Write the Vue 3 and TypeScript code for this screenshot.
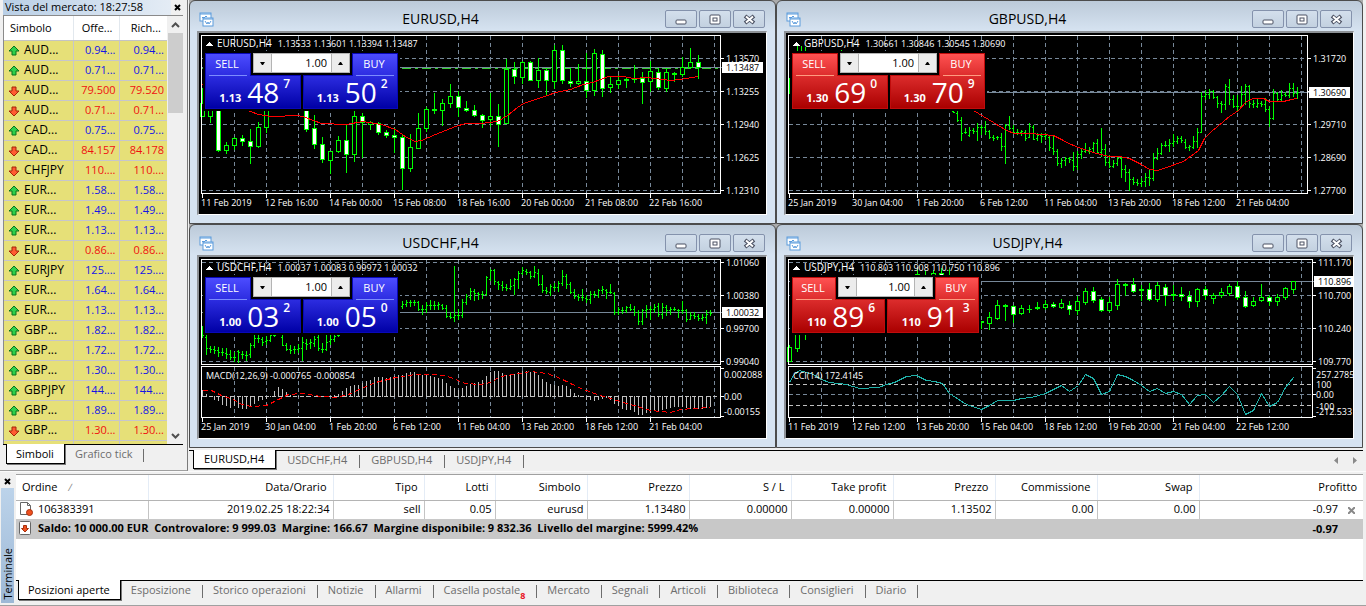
<script setup lang="ts">
import { ref } from 'vue'

type Pt = [number, number]
// high, body top, body bottom, low, filled
type Candle = [number, number, number, number, 0 | 1]
// high, low, open, close
type Bar = [number, number, number, number]
interface Run<T> { from: number; rows: T[] }
interface Label { y: number; text: string }
interface Chart {
  symbol: string
  values: string
  tone: 'blue' | 'red'
  compact?: boolean
  pre: string
  sell: [string, string]
  buy: [string, string]
  right: number
  unit: number
  ox: number
  oy: number
  hgrid: number[]
  price: { y: number; text: string }
  labels: Label[]
  times: string[]
  candles?: Run<Candle>[]
  bars?: Run<Bar>[]
  average?: Pt[]
  bid?: number
  sub?: { title: string; labels: Label[]; zero: number; levels: number[]; line: Pt[]; color: string; dash: string; hist?: number[] }
}

const charts: Chart[] = [
  {
    symbol: 'EURUSD,H4', values: '1.13533 1.13601 1.13394 1.13487', tone: 'blue',
    pre: '1.13', sell: ['48', '7'], buy: ['50', '2'],
    right: 521, unit: 1, ox: 199, oy: 33, hgrid: [25, 58, 91, 124, 157],
    price: { y: 34, text: '1.13487' }, bid: 35,
    labels: [{ y: 25, text: '1.13570' }, { y: 58, text: '1.13255' }, { y: 91, text: '1.12940' }, { y: 124, text: '1.12625' }, { y: 157, text: '1.12310' }],
    times: ['11 Feb 2019', '12 Feb 16:00', '14 Feb 00:00', '15 Feb 08:00', '18 Feb 16:00', '20 Feb 00:00', '21 Feb 08:00', '22 Feb 16:00'],
    candles: [
      { from: 0, rows: [[88, 103, 116, 116, 0], [98, 100, 116, 122, 0], [98, 100, 150, 151, 1], [142, 145, 150, 153, 0], [137, 138, 145, 149, 0], [135, 138, 141, 145, 1], [129, 141, 146, 163, 1], [122, 127, 146, 147, 0], [100, 105, 127, 132, 0]] },
      { from: 13, rows: [
        [100, 105, 129, 131, 1], [115, 128, 144, 148, 1], [137, 144, 159, 162, 1], [151, 151, 160, 173, 0], [136, 140, 151, 152, 0], [125, 140, 154, 172, 1], [111, 116, 154, 161, 0], [113, 116, 122, 157, 1], [121, 122, 124, 129, 0], [122, 123, 132, 134, 1],
        [130, 132, 135, 137, 1], [128, 135, 137, 152, 1], [134, 137, 168, 189, 1], [134, 147, 168, 171, 0], [113, 128, 148, 148, 0], [107, 109, 128, 131, 0], [93, 109, 110, 113, 0], [99, 103, 110, 125, 0], [84, 96, 103, 107, 0], [91, 96, 107, 116, 1],
        [101, 108, 110, 111, 1], [105, 110, 115, 116, 1], [114, 115, 120, 127, 1], [93, 116, 119, 126, 0], [104, 116, 124, 146, 1], [59, 69, 123, 123, 0], [62, 69, 76, 83, 1], [61, 62, 77, 83, 0], [61, 62, 80, 80, 1], [58, 70, 80, 87, 0],
        [68, 70, 80, 94, 1], [45, 50, 81, 88, 0], [45, 50, 80, 83, 1], [68, 81, 83, 86, 1], [64, 81, 83, 84, 0], [53, 81, 90, 97, 1], [49, 53, 90, 95, 0], [50, 54, 88, 96, 1], [77, 84, 87, 92, 0], [75, 80, 84, 88, 0],
        [77, 79, 80, 87, 0], [65, 78, 79, 82, 0], [72, 78, 82, 103, 1], [61, 71, 81, 91, 0], [68, 72, 87, 89, 1], [68, 72, 88, 91, 0], [72, 73, 74, 81, 0], [57, 67, 74, 76, 0], [48, 62, 67, 68, 0], [55, 62, 67, 78, 1]] },
    ],
    average: [[201, 83], [225, 100], [250, 111], [258, 114], [271, 116], [298, 115], [305, 117], [321, 123], [346, 124], [362, 121], [381, 124], [395, 129], [406, 137], [415, 141], [421, 140], [435, 134], [455, 126], [465, 123], [480, 123], [497, 121], [507, 115], [517, 107], [523, 103], [547, 95], [555, 92], [570, 89], [583, 84], [592, 82], [608, 76], [623, 76], [633, 78], [647, 77], [670, 80], [680, 79], [698, 76]],
  },
  {
    symbol: 'GBPUSD,H4', values: '1.30661 1.30846 1.30545 1.30690', tone: 'red',
    pre: '1.30', sell: ['69', '0'], buy: ['70', '9'],
    right: 521, unit: 3, ox: 30, oy: 99, hgrid: [25, 58, 91, 124, 157],
    price: { y: 59, text: '1.30690' },
    labels: [{ y: 25, text: '1.31720' }, { y: 91, text: '1.29710' }, { y: 124, text: '1.28690' }, { y: 157, text: '1.27700' }],
    times: ['25 Jan 2019', '30 Jan 04:00', '1 Feb 20:00', '6 Feb 12:00', '11 Feb 04:00', '13 Feb 20:00', '18 Feb 12:00', '21 Feb 04:00'],
    bars: [
      { from: 0, rows: [[235, 280, 260, 260]] },
      { from: 2, rows: [[137, 152, 152, 152], [137, 152, 152, 152], [140, 152, 152, 152]] },
      { from: 13, rows: [[150, 153, 152, 152]] },
      { from: 41, rows: [
        [315, 336, 334, 335], [333, 362, 340, 361], [350, 420, 361, 398], [385, 400, 396, 396], [381, 407, 406, 390], [385, 399, 389, 393], [369, 420, 393, 380], [375, 402, 380, 381], [363, 402, 380, 393], [390, 415, 393, 410],
        [405, 420, 410, 413], [407, 417, 412, 411], [400, 450, 411, 437], [372, 489, 437, 375], [348, 387, 375, 383], [375, 400, 383, 395], [387, 402, 395, 395], [390, 405, 395, 393], [390, 420, 395, 413], [369, 412, 410, 377],
        [375, 417, 380, 416], [400, 420, 413, 404], [400, 425, 404, 408], [400, 417, 408, 405], [405, 450, 411, 442], [405, 462, 445, 452], [447, 495, 452, 490], [475, 500, 490, 480], [470, 495, 480, 473], [471, 485, 475, 478],
        [455, 510, 480, 497], [453, 507, 497, 462], [445, 475, 462, 452], [430, 455, 452, 450], [440, 460, 452, 447], [425, 455, 445, 430], [418, 460, 430, 457], [384, 467, 457, 447], [432, 495, 447, 487], [465, 500, 487, 497],
        [480, 500, 497, 490], [470, 495, 490, 474], [467, 531, 474, 507], [495, 544, 507, 515], [507, 570, 515, 537], [530, 552, 537, 545], [538, 555, 545, 548], [535, 557, 548, 542], [519, 557, 542, 530], [508, 555, 530, 533],
        [460, 540, 533, 475], [445, 478, 475, 460], [430, 462, 460, 434], [422, 438, 434, 435], [418, 452, 435, 430], [403, 438, 428, 422], [408, 430, 422, 415], [408, 427, 415, 420], [418, 444, 425, 440], [435, 450, 440, 438],
        [408, 445, 442, 424], [384, 440, 424, 395], [277, 395, 395, 287], [270, 298, 287, 283], [268, 295, 283, 272], [269, 294, 272, 292], [287, 322, 292, 309], [302, 336, 309, 313], [252, 327, 313, 258], [237, 312, 260, 298],
        [285, 320, 298, 317], [285, 330, 317, 317], [258, 317, 317, 282], [252, 312, 282, 258], [255, 320, 258, 310], [300, 320, 312, 310], [297, 321, 318, 308], [303, 317, 310, 312], [295, 333, 312, 327], [318, 377, 327, 353],
        [266, 356, 353, 280], [275, 304, 280, 297], [270, 300, 297, 284], [275, 288, 282, 284], [249, 290, 284, 265], [249, 287, 265, 280], [261, 295, 280, 277]] },
    ],
    average: [[590, 329], [650, 365], [690, 390], [715, 398], [760, 398], [830, 404], [860, 420], [870, 425], [905, 441], [960, 458], [1000, 467], [1030, 467], [1060, 475], [1095, 492], [1120, 507], [1142, 511], [1170, 502], [1220, 482], [1265, 450], [1285, 415], [1305, 393], [1340, 363], [1360, 347], [1385, 330], [1410, 303], [1430, 293], [1460, 295], [1480, 303], [1520, 303], [1545, 297], [1564, 294]],
  },
  {
    symbol: 'USDCHF,H4', values: '1.00037 1.00083 0.99972 1.00032', tone: 'blue',
    pre: '1.00', sell: ['03', '2'], buy: ['05', '0'],
    right: 521, unit: 3, ox: 33, oy: 105, hgrid: [5, 38, 71, 104],
    price: { y: 55, text: '1.00032' },
    labels: [{ y: 5, text: '1.01060' }, { y: 38, text: '1.00380' }, { y: 71, text: '0.99700' }, { y: 104, text: '0.99040' }],
    times: ['25 Jan 2019', '30 Jan 04:00', '1 Feb 20:00', '6 Feb 12:00', '11 Feb 04:00', '13 Feb 20:00', '18 Feb 12:00', '21 Feb 04:00'],
    bars: [
      { from: 0, rows: [
        [312, 345, 320, 340], [340, 395, 345, 378], [372, 390, 378, 380], [372, 392, 382, 385], [375, 402, 385, 390], [377, 400, 390, 390], [378, 408, 392, 395], [384, 412, 397, 405], [390, 417, 405, 405], [384, 419, 387, 390],
        [387, 407, 395, 397], [387, 415, 398, 400], [362, 405, 397, 370], [340, 375, 370, 348], [340, 360, 348, 348], [345, 368, 350, 360], [342, 365, 358, 355], [335, 357, 355, 340], [336, 342, 339, 339]] },
      { from: 20, rows: [
        [336, 370, 345, 368], [362, 383, 370, 380], [370, 392, 382, 385], [372, 392, 382, 380], [365, 390, 380, 378], [345, 413, 378, 360], [350, 380, 362, 366], [352, 377, 364, 360], [343, 372, 362, 350], [338, 385, 345, 378],
        [362, 390, 380, 380], [340, 385, 380, 360], [340, 365, 358, 350], [336, 358, 350, 341], [336, 341, 340, 340]] },
      { from: 50, rows: [
        [237, 257, 252, 245], [233, 252, 245, 240], [235, 252, 240, 240], [235, 250, 240, 240], [238, 264, 240, 262], [248, 277, 262, 262], [240, 270, 262, 248], [235, 262, 248, 248], [238, 262, 248, 248], [240, 262, 248, 246],
        [245, 262, 250, 258], [250, 285, 258, 282], [270, 287, 282, 285], [131, 297, 285, 280], [262, 290, 280, 280], [232, 285, 280, 240], [217, 245, 240, 222], [198, 230, 225, 208], [200, 235, 208, 212], [210, 232, 213, 215],
        [207, 227, 215, 215], [163, 220, 215, 165], [142, 175, 170, 145], [142, 185, 145, 178], [177, 200, 180, 185], [178, 205, 190, 195], [187, 205, 195, 198], [172, 202, 198, 192], [168, 215, 190, 172], [148, 197, 172, 152],
        [135, 157, 152, 145], [140, 155, 147, 150], [147, 168, 150, 162], [132, 165, 162, 150], [140, 190, 152, 187], [160, 210, 187, 205], [195, 212, 205, 208], [187, 220, 210, 192], [183, 205, 195, 195], [178, 207, 195, 182],
        [145, 190, 182, 162], [157, 197, 162, 185], [180, 212, 185, 210], [202, 228, 210, 222], [217, 235, 222, 225], [200, 235, 225, 225], [220, 240, 228, 232], [207, 242, 230, 215], [208, 225, 215, 217], [200, 225, 220, 205],
        [192, 212, 205, 202], [200, 228, 205, 210], [186, 212, 210, 210], [210, 275, 212, 270], [255, 275, 270, 260], [255, 272, 265, 265], [252, 270, 265, 255], [246, 265, 255, 262], [252, 280, 262, 270], [263, 305, 270, 297],
        [262, 305, 297, 265], [250, 285, 265, 260], [252, 290, 260, 260], [246, 270, 262, 255], [243, 282, 252, 275], [243, 287, 275, 255], [250, 278, 255, 265], [255, 275, 265, 260], [255, 265, 260, 260], [260, 285, 265, 265],
        [237, 272, 265, 265], [262, 297, 265, 290], [270, 290, 290, 280], [270, 288, 280, 282], [275, 293, 282, 288], [275, 293, 288, 285], [263, 302, 285, 275], [263, 280, 270, 272]] },
    ],
    sub: {
      title: 'MACD(12,26,9) -0.000765 -0.000854', zero: 139, levels: [], color: '#f00', dash: '5 3',
      labels: [{ y: 117, text: '0.002088' }, { y: 139, text: '0.00' }, { y: 154, text: '-0.00155' }],
      hist: [505, 515, 521, 530, 535, 545, 548, 555, 548, 555, 558, 558, 550, 542, 535, 530, 528, 521, 508, 495, 502, 510, 519, 521, 521, 521, 521, 521, 521, 521, 521, 521, 521, 519, 515, 508, 498, 492, 490, 488, 484, 478, 473, 465, 465, 465, 467, 466, 463, 460, 458, 453, 450, 450, 457, 458, 460, 463, 465, 468, 472, 483, 492, 498, 503, 498, 492, 485, 482, 480, 475, 462, 450, 447, 447, 452, 458, 458, 457, 450, 448, 448, 450, 450, 458, 470, 480, 487, 489, 492, 490, 492, 500, 513, 519, 523, 530, 530, 533, 530, 527, 526, 530, 543, 549, 557, 560, 562, 568, 575, 575, 570, 570, 565, 563, 560, 558, 555, 553, 552, 552, 556, 557, 558, 557, 557, 556, 552],
      line: [[43, 503], [70, 505], [100, 518], [135, 532], [160, 545], [190, 553], [235, 548], [270, 530], [300, 517], [340, 512], [400, 523], [440, 524], [480, 515], [520, 498], [560, 480], [620, 465], [680, 457], [720, 455], [770, 458], [800, 470], [830, 482], [876, 487], [906, 480], [936, 463], [976, 455], [1026, 448], [1076, 453], [1116, 467], [1146, 483], [1186, 500], [1226, 515], [1276, 530], [1326, 545], [1386, 565], [1446, 570], [1476, 562], [1516, 558], [1566, 555]],
    },
  },
  {
    symbol: 'USDJPY,H4', values: '110.803 110.908 110.750 110.896', tone: 'red', compact: true,
    pre: '110', sell: ['89', '6'], buy: ['91', '3'],
    right: 526, unit: 3, ox: 30, oy: 105, hgrid: [5, 38, 71, 104],
    price: { y: 24, text: '110.896' },
    labels: [{ y: 5, text: '111.170' }, { y: 38, text: '110.700' }, { y: 71, text: '110.240' }, { y: 104, text: '109.770' }],
    times: ['11 Feb 2019', '12 Feb 12:00', '13 Feb 20:00', '15 Feb 04:00', '18 Feb 12:00', '19 Feb 20:00', '21 Feb 04:00', '22 Feb 12:00'],
    candles: [
      { from: 0, rows: [[368, 375, 416, 418, 0], [330, 332, 377, 387, 0], [330, 332, 335, 350, 0]] },
      { from: 16, rows: [[140, 156, 170, 175, 0], [147, 170, 175, 175, 0], [143, 153, 170, 175, 0], [137, 152, 165, 170, 1], [141, 170, 175, 180, 1]] },
      { from: 24, rows: [
        [298, 298, 301, 318, 0], [270, 286, 302, 320, 0], [234, 250, 287, 290, 0], [246, 249, 252, 293, 0], [250, 252, 275, 300, 1], [250, 259, 272, 277, 0], [250, 260, 261, 270, 0], [240, 256, 259, 260, 0], [235, 246, 256, 262, 0], [240, 247, 253, 254, 1],
        [231, 244, 254, 258, 0], [237, 250, 262, 275, 1], [222, 238, 263, 276, 0], [198, 208, 240, 245, 0], [195, 208, 234, 240, 1], [225, 231, 264, 267, 1], [225, 240, 264, 268, 0], [171, 187, 248, 260, 0], [183, 185, 188, 218, 0], [168, 187, 206, 210, 1],
        [190, 202, 205, 235, 0], [183, 201, 230, 234, 1], [180, 189, 231, 238, 0], [185, 195, 220, 249, 1], [190, 217, 220, 234, 0], [195, 217, 223, 234, 1], [208, 222, 236, 255, 1], [198, 202, 236, 252, 0], [192, 202, 220, 232, 1], [212, 220, 227, 242, 0],
        [198, 210, 220, 224, 0], [187, 192, 213, 220, 0], [178, 193, 226, 232, 1], [207, 226, 251, 254, 1], [224, 238, 248, 251, 0], [186, 226, 235, 237, 0], [219, 226, 238, 249, 1], [216, 226, 238, 249, 0], [195, 199, 226, 232, 0], [178, 178, 200, 213, 0]] },
    ],
    sub: {
      title: 'CCI(14) 172.4145', zero: 137, levels: [127, 148], color: '#20b2aa', dash: 'none',
      labels: [{ y: 117, text: '257.2785' }, { y: 127, text: '100' }, { y: 137, text: '0.00' }, { y: 149, text: '-100' }, { y: 154, text: '-212.533' }],
      line: [[38, 480], [52, 458], [68, 445], [90, 450], [110, 455], [135, 470], [160, 480], [185, 482], [210, 486], [250, 498], [305, 496], [330, 487], [355, 481], [390, 463], [420, 460], [450, 475], [475, 476], [497, 483], [520, 514], [570, 545], [616, 562], [640, 550], [664, 535], [712, 535], [735, 529], [765, 525], [808, 514], [832, 502], [856, 488], [880, 508], [905, 490], [928, 455], [952, 467], [976, 517], [1000, 508], [1024, 457], [1048, 462], [1072, 473], [1096, 490], [1120, 506], [1144, 497], [1168, 514], [1192, 506], [1216, 517], [1240, 545], [1264, 520], [1288, 517], [1312, 539], [1336, 520], [1360, 492], [1384, 515], [1408, 577], [1432, 565], [1456, 514], [1480, 552], [1504, 540], [1528, 495], [1550, 465]],
    },
  },
]

const vgrid = Array.from({ length: 16 }, (_, k) => 35 + 32 * k)
const bottomOf = (c: Chart) => (c.sub ? 107 : 160)
const yOf = (c: Chart, v: number) => Math.round((v - c.oy) / c.unit)
const points = (c: Chart, list: Pt[]) =>
  list.map(([x, y]) => `${Math.round((x - c.ox) / c.unit)},${yOf(c, y)}`).join(' ')

const box = (x: number, y: number, w: number, h: number) => `M${x} ${y}h${w}v${h}h${-w}z`

function barPath(c: Chart): string {
  let d = ''
  for (const run of c.bars ?? []) {
    run.rows.forEach(([hi, lo, open, close], k) => {
      const x = 3 + 4 * (run.from + k)
      const top = yOf(c, hi)
      d += box(x, top, 1, yOf(c, lo) - top + 1)
      d += box(x - 1, yOf(c, open), 1, 1) + box(x + 1, yOf(c, close), 1, 1)
    })
  }
  return d
}

function candlePath(c: Chart, part: 'edge' | 'hollow' | 'filled'): string {
  let d = ''
  for (const run of c.candles ?? []) {
    run.rows.forEach(([hi, bt, bb, lo, filled], k) => {
      const x = 3 + 8 * (run.from + k)
      const top = yOf(c, hi)
      const a = yOf(c, bt)
      const b = yOf(c, bb)
      if (part === 'edge') d += box(x, top, 1, yOf(c, lo) - top + 1) + box(x - 2, a, 5, b - a + 1)
      else if ((part === 'filled') === (filled === 1) && b - a > 1) d += box(x - 1, a + 1, 3, b - a - 1)
    })
  }
  return d
}

function histPath(c: Chart): string {
  const zero = c.sub?.zero ?? 0
  return (c.sub?.hist ?? []).map((v, k) => {
    const y = yOf(c, v)
    return box(3 + 4 * k, Math.min(y, zero), 1, Math.abs(y - zero) + 1)
  }).join('')
}

const quotes: [string, string, string, boolean][] = [
  ['AUD...', '0.94...', '0.94...', true], ['AUD...', '0.71...', '0.71...', true],
  ['AUD...', '79.500', '79.520', false], ['AUD...', '0.71...', '0.71...', false],
  ['CAD...', '0.75...', '0.75...', true], ['CAD...', '84.157', '84.178', false],
  ['CHFJPY', '110....', '110....', false], ['EUR...', '1.58...', '1.58...', true],
  ['EUR...', '1.49...', '1.49...', true], ['EUR...', '1.13...', '1.13...', true],
  ['EUR...', '0.86...', '0.86...', false], ['EURJPY', '125....', '125....', true],
  ['EUR...', '1.64...', '1.64...', true], ['EUR...', '1.13...', '1.13...', true],
  ['GBP...', '1.82...', '1.82...', true], ['GBP...', '1.72...', '1.72...', true],
  ['GBP...', '1.30...', '1.30...', true], ['GBPJPY', '144....', '144....', true],
  ['GBP...', '1.89...', '1.89...', true], ['GBP...', '1.30...', '1.30...', false],
]

const volumes = ref(['1.00', '1.00', '1.00', '1.00'])
const columns = ['Data/Orario', 'Tipo', 'Lotti', 'Simbolo', 'Prezzo', 'S / L', 'Take profit', 'Prezzo', 'Commissione', 'Swap', 'Profitto']
const order = ['2019.02.25 18:22:34', 'sell', '0.05', 'eurusd', '1.13480', '0.00000', '0.00000', '1.13502', '0.00', '0.00']
const chartTabs = ['EURUSD,H4', 'USDCHF,H4', 'GBPUSD,H4', 'USDJPY,H4']
const terminalTabs = ['Posizioni aperte', 'Esposizione', 'Storico operazioni', 'Notizie', 'Allarmi', 'Casella postale', 'Mercato', 'Segnali', 'Articoli', 'Biblioteca', 'Consiglieri', 'Diario']
</script>

<template>
  <div class="app">
    <aside class="market">
      <header class="market-title">
        <span class="caption">Vista del mercato: 18:27:58</span>
        <button class="close" aria-label="Chiudi">
          <svg width="7" height="7" viewBox="0 0 7 7"><path d="M1 1l5 5M6 1l-5 5" stroke="#000" stroke-width="2" /></svg>
        </button>
      </header>
      <div class="market-list">
        <table class="quotes">
          <colgroup><col class="c-sym"><col class="c-bid"><col></colgroup>
          <thead><tr><th>Simbolo</th><th>Offe...</th><th>Rich...</th></tr></thead>
          <tbody>
            <tr v-for="(q, i) in quotes" :key="i" :class="q[3] ? 'up' : 'down'">
              <td>
                <svg class="arrow" width="12" height="12" viewBox="0 0 12 12">
                  <path v-if="q[3]" d="M6 1l5 5h-3v4h-4v-4h-3z" fill="#2fd04a" stroke="#08731c" />
                  <path v-else d="M6 11l5-5h-3v-4h-4v4h-3z" fill="#ff5a30" stroke="#a32408" />
                </svg>{{ q[0] }}
              </td>
              <td>{{ q[1] }}</td><td>{{ q[2] }}</td>
            </tr>
            <tr class="rest"><td></td><td></td><td></td></tr>
          </tbody>
        </table>
        <div class="scroll">
          <button aria-label="Su"><svg width="9" height="6" viewBox="0 0 9 6"><path d="M1 5l3.500-3.500 3.500 3.500" fill="none" stroke="#505050" stroke-width="2" /></svg></button>
          <div class="thumb"></div>
          <button aria-label="Giu"><svg width="9" height="6" viewBox="0 0 9 6"><path d="M1 1l3.500 3.500 3.500-3.500" fill="none" stroke="#505050" stroke-width="2" /></svg></button>
        </div>
      </div>
      <nav class="tabs market-tabs">
        <button class="on">Simboli</button><button>Grafico tick</button>
      </nav>
    </aside>

    <main class="desk">
      <div class="windows">
        <section v-for="(c, i) in charts" :key="c.symbol" class="win">
          <header class="win-title">
            <svg width="15" height="15" viewBox="0 0 15 15">
              <rect x="1" y="1" width="11" height="8" fill="#fff" stroke="#5b9bdc" />
              <path d="M1 2h11M3 6l1-1 1 1 2-2 1 1" fill="none" stroke="#5b9bdc" />
              <rect x="4" y="6" width="10" height="8" fill="#fff" stroke="#5b9bdc" />
              <path d="M4 7h10M6 9l2 3 1-2 1 2 2-3" fill="none" stroke="#5b9bdc" />
            </svg>
            <h2>{{ c.symbol }}</h2>
            <div class="win-buttons">
              <button aria-label="Riduci"><svg width="13" height="13" viewBox="0 0 13 13"><rect x="1" y="7" width="10" height="4" rx="1" fill="#fff" stroke="#4b5162" /></svg></button>
              <button aria-label="Ingrandisci"><svg width="13" height="13" viewBox="0 0 13 13"><rect x="1" y="2" width="10" height="9" rx="1" fill="#fff" stroke="#4b5162" /><rect x="4" y="5" width="4" height="3" fill="#fff" stroke="#4b5162" /></svg></button>
              <button aria-label="Chiudi"><svg width="13" height="13" viewBox="0 0 13 13"><path d="M2 3l9 7M11 3l-9 7" stroke="#4b5162" stroke-width="4" /><path d="M3 3.500l7 6M10 3.500l-7 6" stroke="#fff" stroke-width="2" /></svg></button>
            </div>
          </header>
          <div class="client">
            <svg class="plot" viewBox="0 0 567 181" preserveAspectRatio="xMinYMin meet">
              <g transform="translate(.5 .5)" class="lines">
                <g class="grid">
                  <path v-for="x in vgrid" :key="x" :d="`M${x} 2V${bottomOf(c)}` + (c.sub ? `M${x} 109V160` : '')" />
                  <path v-for="y in c.hgrid" :key="'h' + y" :d="`M2 ${y}H${c.right}`" />
                  <path v-if="c.sub" :d="`M2 ${c.sub.zero}H${c.right}`" :class="{ level: c.sub.hist }" />
                  <path v-for="y in c.sub?.levels ?? []" :key="'l' + y" class="level" :d="`M2 ${y}H${c.right}`" />
                </g>
                <path class="price" :d="`M2 ${c.price.y}H${c.right + 4}`" />
                <path v-if="c.bid" class="bid" :d="`M2 ${c.bid}H${c.right}`" />
              </g>
              <path :d="histPath(c)" fill="#c0c0c0" />
              <path :d="barPath(c) + candlePath(c, 'edge')" fill="#0f0" />
              <path :d="candlePath(c, 'hollow')" fill="#000" />
              <path :d="candlePath(c, 'filled')" fill="#fff" />
              <g transform="translate(.5 .5)" class="lines">
                <polyline v-if="c.average" :points="points(c, c.average)" stroke="#f00" />
                <polyline v-if="c.sub" :points="points(c, c.sub.line)" :stroke="c.sub.color" :stroke-dasharray="c.sub.dash" />
                <g stroke="#fff">
                  <path :d="`M2 2H${c.right}V${bottomOf(c)}H2z`" />
                  <path v-if="c.sub" :d="`M2 109H${c.right}V160H2z`" />
                  <path v-for="y in c.hgrid" :key="y" :d="`M${c.right} ${y}h3`" />
                  <path v-if="c.sub" :d="`M${c.right} 111h3M${c.right} ${c.sub.zero}h3M${c.right} 159h3`" />
                  <path v-for="(t, k) in c.times" :key="t" :d="`M${3 + 64 * k} 160v4`" />
                </g>
              </g>
              <path d="M6 13l4-4 4 4z" fill="#fff" />
              <g class="labels">
                <text x="18" y="14" class="head">{{ c.symbol }}<tspan class="vals" dx="6">{{ c.values }}</tspan></text>
                <text v-for="l in c.labels" :key="l.text" :x="c.right + 6" :y="l.y + 4">{{ l.text }}</text>
                <rect :x="c.right + 2" :y="c.price.y - 5" width="41" height="11" fill="#fff" />
                <text class="now" :x="c.right + 6" :y="c.price.y + 4">{{ c.price.text }}</text>
                <text v-for="(t, k) in c.times" :key="t" :x="2 + 64 * k" y="173">{{ t }}</text>
                <template v-if="c.sub">
                  <text x="7" y="122">{{ c.sub.title }}</text>
                  <text v-for="l in c.sub.labels" :key="l.text" :x="c.right + 4" :y="l.y + 4">{{ l.text }}</text>
                </template>
              </g>
            </svg>
            <div class="deal" :class="[c.tone, { compact: c.compact }]">
              <button class="side sell">
                <span class="cap">SELL</span>
                <span class="quote"><b>{{ c.pre }}</b><span class="big">{{ c.sell[0] }}</span><sup>{{ c.sell[1] }}</sup></span>
              </button>
              <button class="side buy">
                <span class="cap">BUY</span>
                <span class="quote"><b>{{ c.pre }}</b><span class="big">{{ c.buy[0] }}</span><sup>{{ c.buy[1] }}</sup></span>
              </button>
              <div class="spin">
                <button aria-label="Meno"><svg width="5" height="3" viewBox="0 0 5 3"><path d="M0 0h5l-2 3h-1z" /></svg></button>
                <input v-model="volumes[i]" type="text" aria-label="Volume">
                <button aria-label="Piu"><svg width="5" height="3" viewBox="0 0 5 3"><path d="M0 3h5l-2-3h-1z" /></svg></button>
              </div>
            </div>
          </div>
        </section>
      </div>
      <nav class="tabs chart-tabs">
        <button v-for="(t, i) in chartTabs" :key="t" :class="{ on: i === 0 }">{{ t }}</button>
        <span class="pager">
          <svg width="23" height="7" viewBox="0 0 23 7"><path d="M4 0v7l-4-3.500zM19 0v7l4-3.500z" fill="#8a8a8a" /></svg>
        </span>
      </nav>
    </main>

    <section class="terminal">
      <div class="strip">
        <button class="close" aria-label="Chiudi">
          <svg width="7" height="7" viewBox="0 0 7 7"><path d="M1 1l5 5M6 1l-5 5" stroke="#000" stroke-width="2" /></svg>
        </button>
        <div class="strip-name"><span>Terminale</span></div>
      </div>
      <div class="orders">
        <div class="sheet">
          <table>
            <colgroup>
              <col class="w-order"><col class="w-date"><col class="w-type"><col class="w-lots"><col class="w-sym">
              <col v-for="n in 6" :key="n" class="w-num"><col>
            </colgroup>
            <thead>
              <tr>
                <th class="first">Ordine <i class="sort">∕</i></th>
                <th v-for="(h, i) in columns" :key="i">{{ h }}</th>
              </tr>
            </thead>
            <tbody>
              <tr>
                <td class="first">
                  <svg width="15" height="16" viewBox="0 0 15 16">
                    <path d="M1.500 1.500h7l3 3v9h-10z" fill="#fff" stroke="#666" /><path d="M8.500 1.500v3h3" fill="none" stroke="#666" />
                    <circle cx="10.500" cy="11.500" r="3" fill="#f0501e" stroke="#a8300c" />
                  </svg>106383391
                </td>
                <td v-for="(v, i) in order" :key="i">{{ v }}</td>
                <td class="profit">-0.97
                  <button class="drop" aria-label="Chiudi ordine"><svg width="7" height="7" viewBox="0 0 7 7"><path d="M0 0l7 7M7 0l-7 7" stroke="#888" stroke-width="2" /></svg></button>
                </td>
              </tr>
              <tr class="balance">
                <td class="first" colspan="11">
                  <svg width="13" height="15" viewBox="0 0 13 15">
                    <rect x=".5" y=".5" width="11" height="13" rx="1" fill="#fff" stroke="#666" />
                    <path d="M6 11l3.500-3.500h-2v-3h-3v3h-2z" fill="#f0501e" stroke="#a8300c" />
                  </svg>Saldo: 10 000.00 EUR&nbsp; Controvalore: 9 999.03&nbsp; Margine: 166.67&nbsp; Margine disponibile: 9 832.36&nbsp; Livello del margine: 5999.42%
                </td>
                <td class="profit">-0.97</td>
              </tr>
            </tbody>
          </table>
        </div>
        <nav class="tabs term-tabs">
          <button v-for="(t, i) in terminalTabs" :key="t" :class="{ on: i === 0 }">{{ t }}<sub v-if="t === 'Casella postale'">8</sub></button>
        </nav>
      </div>
    </section>
  </div>
</template>

<style>
body { margin: 0; background: #f0f0f0; }
</style>

<style scoped>
.app {
  min-height: 100vh;
  box-sizing: border-box;
  display: grid;
  grid-template-columns: 188px 1fr;
  grid-template-rows: auto 1fr;
  background: #f0f0f0;
  color: #000;
  font: 11px/14px "Open Sans", "Noto Sans", sans-serif;
  overflow: hidden;
}
button { font: inherit; margin: 0; padding: 0; border: 0; background: none; color: inherit; }
table { border-collapse: collapse; table-layout: fixed; width: 100%; }
svg { display: block; }

.market { display: flex; flex-direction: column; padding: 0 4px 4px 3px; border-right: 1px solid #7a7a7a; border-bottom: 1px solid #a0a0a0; }
.market-title { display: flex; align-items: center; height: 15px; }
.caption { flex: 1; height: 15px; padding-left: 2px; background: linear-gradient(90deg, #b9cfe6, #e4ecf5); white-space: nowrap; }
.close { width: 12px; height: 15px; display: grid; place-items: center; }
.market-list { display: flex; height: 429px; overflow: hidden; border-left: 1px solid #8a8a8a; border-top: 1px solid #8a8a8a; box-sizing: border-box; }
.quotes { width: 163px; background: #e6e078; align-self: flex-start; }
.c-sym { width: 69px; }
.c-bid { width: 46px; }
.quotes th { height: 24px; padding: 0 6px 0 0; background: #fff; font-weight: 400; text-align: right; border-right: 1px solid #e2e8ee; border-bottom: 1px solid #c4c4c4; box-sizing: border-box; }
.quotes th:first-child { text-align: left; padding-left: 6px; }
.quotes td { height: 20px; padding: 0 3px 0 0; text-align: right; box-sizing: border-box; border-right: 1px solid #c6c6cc; border-bottom: 1px solid #c6c6cc; overflow: hidden; white-space: nowrap; }
.quotes td:first-child { text-align: left; padding-left: 4px; color: #000; font-size: 12px; }
.quotes td:last-child, .quotes th:last-child { border-right: 0; }
.quotes .rest td { height: 6px; border-bottom: 0; }
.quotes .arrow { display: inline-block; vertical-align: -3px; margin-right: 4px; }
.up { color: #1414e6; }
.down { color: #f01010; }
.scroll { width: 15px; margin-left: 1px; display: flex; flex-direction: column; }
.scroll button { height: 17px; display: grid; place-items: center; }
.scroll .thumb { height: 80px; background: #cdcdcd; margin-bottom: auto; }

.tabs { display: flex; border-top: 1px solid #000; color: #6d6d6d; }
.tabs button { position: relative; padding: 0 12px 0 10px; height: 18px; white-space: nowrap; }
.tabs button::after { content: ""; position: absolute; right: 0; top: 4px; height: 13px; width: 1px; background: #6d6d6d; }
.tabs button.on { height: 20px; margin-top: -1px; padding: 1px 10px 0 9px; background: #fff; color: #000; border: 1px solid #000; border-top: 0; box-shadow: 1px 1px 0 #777; }
.tabs button.on::after { display: none; }
.tabs sub { color: #e81123; font-weight: 700; font-size: 9px; line-height: 0; vertical-align: -5px; }
.market-tabs { padding-left: 3px; height: 20px; }

.desk { display: flex; flex-direction: column; padding-right: 3px; padding-left: 1px; background: #f0f0f0; min-width: 0; }
.windows { display: grid; grid-template-columns: 1fr 1fr; background: #ababab; }
.win { box-sizing: border-box; height: 224px; min-width: 0; padding: 0 8px 8px 7px; border: 1px solid #4c4c4c; border-radius: 6px 6px 0 0; background: linear-gradient(#bccad9, #d6e3f1 30px); }
.win-title { display: flex; align-items: center; height: 30px; padding: 6px 2px 0 2px; box-sizing: border-box; }
.win-title h2 { flex: 1; margin: 0; padding-left: 2px; text-align: center; font-size: 14px; line-height: 20px; font-weight: 400; }
.win-buttons { display: flex; gap: 2px; }
.win-buttons button { width: 32px; height: 18px; display: grid; place-items: center; border: 1px solid #8492ac; border-radius: 2px; box-sizing: border-box; background: linear-gradient(#d3dfec, #c3d1e0); }
.client { position: relative; background: #000; border: solid #8d9196; border-width: 2px 1px 1px 2px; border-right-color: #fff; border-bottom-color: #fff; }
.plot { width: 100%; height: 181px; shape-rendering: crispEdges; overflow: hidden; }
.lines { fill: none; stroke-width: 1; }
.grid { stroke: #778899; stroke-dasharray: 4 3; }
.grid .level { stroke: #c0c0c0; }
.price { stroke: #778899; }
.bid { stroke: #32cd32; stroke-dasharray: 9 4 3 4; }
.labels { font-size: 9px; fill: #fff; }
.head { font-size: 10px; }
.vals { font-size: 9px; }
.labels .now { fill: #000; }

.deal { position: absolute; left: 6px; top: 20px; width: 193px; height: 56px; display: flex; justify-content: space-between; background: #000; box-shadow: 0 0 0 2px #000; color: #fff; --cap: 46px; }
.deal.compact { width: 187px; --cap: 44px; }
.blue { --hi: #4c4cff; --mid: #2c2ce0; --lo: #0000a6; --edge: #0808b8; --rule: #7c8cff; }
.red { --hi: #ff5252; --mid: #dc2c2c; --lo: #aa0000; --edge: #c00c0c; --rule: #ff9c80; }
.side { width: calc(50% - 1px); display: flex; flex-direction: column; }
.side.buy { align-items: flex-end; }
.cap { position: relative; z-index: 1; width: var(--cap); height: 23px; margin-bottom: -1px; box-sizing: border-box; border: 1px solid var(--edge); border-bottom: 0; padding-right: 2px; background: linear-gradient(var(--hi), var(--mid)); line-height: 20px; font-size: 11px; }
.cap::after { content: ""; position: absolute; left: 3px; right: 3px; bottom: 0; height: 1px; background: var(--rule); }
.quote { position: relative; width: 100%; height: 34px; box-sizing: border-box; border: 1px solid var(--edge); background: linear-gradient(var(--mid), var(--lo)); display: flex; justify-content: center; align-items: flex-end; }
.quote b { font-size: 11px; line-height: 12px; font-weight: 700; padding: 0 6px 4px 4px; }
.compact .quote b { padding-left: 6px; }
.big { font-size: 28px; line-height: 32px; }
.quote sup { align-self: flex-start; font-size: 12px; line-height: 14px; font-weight: 600; padding-left: 4px; margin-top: 1px; }
.spin { position: absolute; left: calc(var(--cap) + 2px); right: calc(var(--cap) + 2px); top: 0; height: 20px; display: flex; box-sizing: border-box; border: 1px solid #b4b4b4; background: #fff; }
.spin button { width: 18px; flex: none; display: grid; place-items: center; background: #ececec; }
.spin button:first-child { border-right: 1px solid #b4b4b4; }
.spin button:last-child { border-left: 1px solid #b4b4b4; }
.spin input { flex: 1; min-width: 0; border: 0; padding: 0 4px 0 0; margin: 0; text-align: right; font: inherit; outline: 0; background: #fff; }

.chart-tabs { margin-top: 2px; padding-left: 4px; height: 19px; padding-bottom: 1px; }
.chart-tabs button { padding: 0 13px 0 11px; }
.chart-tabs button.on { height: 19px; padding: 0 11px 0 10px; }
.pager { margin-left: auto; padding: 6px 6px 0 0; }

.terminal { grid-column: 1 / -1; display: flex; padding: 2px 3px 0 1px; border-bottom: 1px solid #a0a0a0; border-top: 1px solid #fafafa; }
.strip { width: 15px; display: flex; flex-direction: column; }
.strip .close { height: 14px; }
.strip-name { flex: 1; width: 13px; margin-bottom: 2px; display: flex; align-items: flex-end; background: linear-gradient(#bcd3ea, #9db8d6); }
.strip-name span { writing-mode: vertical-rl; transform: rotate(180deg); line-height: 13px; padding-top: 3px; }
.orders { flex: 1; min-width: 0; display: flex; flex-direction: column; border-top: 1px solid #a0a0a0; }
.sheet { flex: 1; background: #fff; }
.w-order { width: 132px; }
.w-date { width: 185px; }
.w-type { width: 91px; }
.w-lots { width: 71px; }
.w-sym { width: 92px; }
.w-num { width: 102px; }
.orders th { height: 25px; padding: 0 6px 1px 0; box-sizing: border-box; font-weight: 400; text-align: right; border-right: 1px solid #e4ecf6; border-bottom: 1px solid #b4b4b4; }
.orders td { height: 19px; padding: 0 3px 1px 0; box-sizing: border-box; text-align: right; border-right: 1px solid #c4c4c4; white-space: nowrap; }
.orders th:last-child, .orders td:last-child { border-right: 0; }
.orders .first { text-align: left; padding-left: 6px; }
.orders td.first { padding-left: 3px; }
.orders td.first svg { display: inline-block; vertical-align: -4px; margin-right: 4px; }
.sort { margin-left: 8px; color: #888; font-size: 10px; }
.orders td.profit { position: relative; padding-right: 25px; }
.drop { position: absolute; right: 8px; top: 6px; }
.orders .balance td { height: 20px; background: #c8c8c8; border: 0; font-weight: 700; }
.orders .balance td.first svg { margin-right: 6px; }
.term-tabs { padding: 0 0 4px 2px; height: 20px; }
</style>
